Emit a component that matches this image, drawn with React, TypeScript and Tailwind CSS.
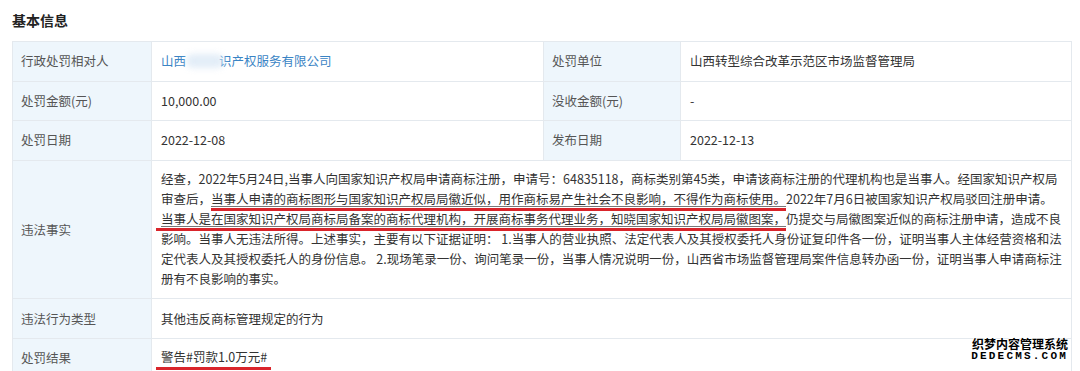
import React from 'react';

const label = 'bg-[#eef6fc] text-[#555] px-[8px] border-r border-b border-[#e4e9ee] flex items-center';
const cell = 'px-[9px] border-r border-b border-[#e4e9ee] flex items-center';
const value = `${cell} text-[#333]`;
const mark = 'border-b-[3px] border-[#d9252b] underline decoration-[#777] decoration-1 underline-offset-[2px]';

export default function App() {
  return (
    <div className="relative h-[371px] w-[1080px] overflow-hidden bg-white font-['Noto_Sans_CJK_SC','Noto_Sans',sans-serif] text-[12.5px]">
      <h2 className="px-[12px] pt-[10px] text-[14px] font-bold leading-[20px] text-[#222]">基本信息</h2>

      <div className="mx-[12px] mt-[11px] grid w-[1060px] grid-cols-[139px_392px_137px_1fr] border-l border-t border-[#e4e9ee] leading-[20px]">
        {/* row 1 */}
        <div className={`${label} h-[39.6px]`}>行政处罚相对人</div>
        <div className={`${cell} text-[#3a84c4]`}>
          山西
          <span className="relative z-10 -mr-[5px] inline-block h-[14px] w-[38px] rounded-full bg-[#dce9f6] opacity-80 blur-[3px]" />
          识产权服务有限公司
        </div>
        <div className={label}>处罚单位</div>
        <div className={value}>山西转型综合改革示范区市场监督管理局</div>

        {/* row 2 */}
        <div className={`${label} h-[39.6px]`}>处罚金额(元)</div>
        <div className={value}>10,000.00</div>
        <div className={label}>没收金额(元)</div>
        <div className={value}>-</div>

        {/* row 3 */}
        <div className={`${label} h-[39.6px]`}>处罚日期</div>
        <div className={value}>2022-12-08</div>
        <div className={label}>发布日期</div>
        <div className={value}>2022-12-13</div>

        {/* row 4 */}
        <div className={`${label} h-[138.6px]`}>违法事实</div>
        <div className="col-span-3 whitespace-nowrap border-r border-b border-[#e4e9ee] px-[9px] pt-[8px] text-[#333]">
          经查，2022年5月24日,当事人向国家知识产权局申请商标注册，申请号：64835118，商标类别第45类，申请该商标注册的代理机构也是当事人。经国家知识产权局
          <br />
          审查后，<span className={mark}>当事人申请的商标图形与国家知识产权局局徽近似，用作商标易产生社会不良影响，不得作为商标使用。</span>2022年7月6日被国家知识产权局驳回注册申请。
          <br />
          <span className={`${mark} -ml-[5px] pl-[5px]`}>当事人是在国家知识产权局商标局备案的商标代理机构，开展商标事务代理业务，知晓国家知识产权局局徽图案，</span>仍提交与局徽图案近似的商标注册申请，造成不良
          <br />
          影响。当事人无违法所得。上述事实，主要有以下证据证明： 1.当事人的营业执照、法定代表人及其授权委托人身份证复印件各一份，证明当事人主体经营资格和法
          <br />
          定代表人及其授权委托人的身份信息。 2.现场笔录一份、询问笔录一份，当事人情况说明一份，山西省市场监督管理局案件信息转办函一份，证明当事人申请商标注
          <br />
          册有不良影响的事实。
        </div>

        {/* row 5 */}
        <div className={`${label} h-[39.6px]`}>违法行为类型</div>
        <div className={`${value} col-span-3`}>其他违反商标管理规定的行为</div>

        {/* row 6 */}
        <div className={`${label} h-[39.6px]`}>处罚结果</div>
        <div className={`${value} col-span-3`}>
          <span className="-ml-[5px] border-b-[3px] border-[#d9252b] pl-[5px] pr-[4px]">警告#罚款1.0万元#</span>
        </div>
      </div>

      {/* watermark */}
      <div className="absolute right-[12px] top-[337px] flex flex-col items-end font-bold leading-[13px] text-black [text-shadow:1px_0_0_#fff,-1px_0_0_#fff,0_1px_0_#fff,0_-1px_0_#fff]">
        <span className="text-[12px]">织梦内容管理系统</span>
        <span className="font-['Liberation_Mono',monospace] text-[11px] tracking-[2.2px]">DEDECMS.COM</span>
      </div>
    </div>
  );
}
